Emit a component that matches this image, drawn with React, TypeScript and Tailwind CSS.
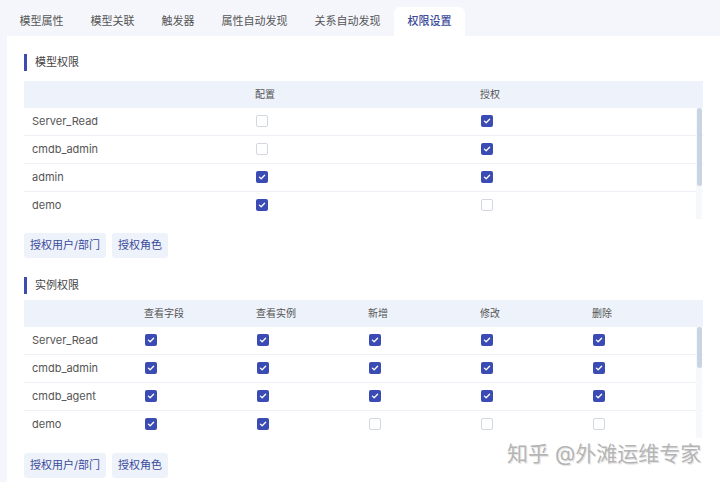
import React from 'react'

const tabs = ['模型属性', '模型关联', '触发器', '属性自动发现', '关系自动发现', '权限设置']

function Checkbox({ checked }: { checked: boolean }) {
  if (!checked) {
    return <span className="block w-[12px] h-[12px] rounded-[2px] border border-[#d3d7e0] bg-white" />
  }
  return (
    <span className="flex items-center justify-center w-[12px] h-[12px] rounded-[2px] bg-[#3a4cb3]">
      <svg width="8" height="8" viewBox="0 0 8 8" fill="none">
        <path d="M1.4 4.1 3.2 5.8 6.6 2.3" stroke="#fff" strokeWidth="1.3" strokeLinecap="round" strokeLinejoin="round" />
      </svg>
    </span>
  )
}

function SectionTitle({ title }: { title: string }) {
  return (
    <div className="flex items-center gap-[8px] h-[17px]">
      <span className="w-[3px] h-[17px] bg-[#3d4cae]" />
      <span className="text-[11px] text-[#444]">{title}</span>
    </div>
  )
}

function Buttons() {
  return (
    <div className="flex gap-[6px]">
      {['授权用户/部门', '授权角色'].map(b => (
        <button key={b} className="h-[25px] px-[6px] rounded-[3px] bg-[#eef2fa] text-[11px] leading-[25px] whitespace-nowrap text-[#3b4a9a]">{b}</button>
      ))}
    </div>
  )
}

function PermTable({ headers, widths, rows, bodyH, thumbH }: {
  headers: string[]; widths: number[]; rows: { name: string; vals: boolean[] }[]; bodyH: number; thumbH: number
}) {
  return (
    <div className="w-[679px]">
      <div className="flex h-[27px] items-center bg-[#edf2fb]">
        {headers.map((h, i) => (
          <div key={i} style={{ width: widths[i] }} className="pl-[8px] text-[10px] text-[#555]">{h}</div>
        ))}
      </div>
      <div className="relative overflow-hidden" style={{ height: bodyH }}>
        {rows.map(r => (
          <div key={r.name} className="flex h-[28px] items-center pb-[1px] border-b border-[#eef0f5]">
            <div style={{ width: widths[0] }} className="pl-[8px] text-[11px] text-[#555]">{r.name}</div>
            {r.vals.map((v, i) => (
              <div key={i} style={{ width: widths[i + 1] }} className="pl-[9px]">
                <Checkbox checked={v} />
              </div>
            ))}
          </div>
        ))}
        <div className="absolute right-[1px] top-0 bottom-0 w-[6px] bg-[#f6f8fb]">
          <div className="w-[5px] mx-auto rounded-full bg-[#c9d3e3]" style={{ height: thumbH }} />
        </div>
      </div>
    </div>
  )
}

export default function App() {
  const modelRows = [
    { name: 'Server_Read', vals: [false, true] },
    { name: 'cmdb_admin', vals: [false, true] },
    { name: 'admin', vals: [true, true] },
    { name: 'demo', vals: [true, false] },
    { name: 'test', vals: [false, false] },
  ]
  const instRows = [
    { name: 'Server_Read', vals: [true, true, true, true, true] },
    { name: 'cmdb_admin', vals: [true, true, true, true, true] },
    { name: 'cmdb_agent', vals: [true, true, true, true, true] },
    { name: 'demo', vals: [true, true, false, false, false] },
    { name: 'test', vals: [false, false, false, false, false] },
  ]

  return (
    <div className="relative w-[720px] h-[482px] overflow-hidden bg-[#f4f6fb]" style={{ fontFamily: 'Inter, "Noto Sans CJK SC", sans-serif' }}>
      <div className="flex items-end h-[36px] pl-[6px]">
        {tabs.map((t, i) => (
          <div
            key={t}
            className={`h-[29px] px-[13.5px] flex items-center rounded-t-[6px] text-[11px] whitespace-nowrap ${
              i === tabs.length - 1 ? 'bg-white text-[#3b4a9a] font-medium' : 'text-[#555]'
            }`}
          >
            {t}
          </div>
        ))}
      </div>

      <div className="ml-[7px] h-[446px] bg-white pl-[17px] pt-[18px]">
        <SectionTitle title="模型权限" />
        <div className="mt-[10px]">
          <PermTable headers={['', '配置', '授权']} widths={[223, 225, 224]} rows={modelRows} bodyH={111} thumbH={78} />
        </div>
        <div className="mt-[14px]">
          <Buttons />
        </div>
        <div className="mt-[19px]">
          <SectionTitle title="实例权限" />
        </div>
        <div className="mt-[6px]">
          <PermTable
            headers={['', '查看字段', '查看实例', '新增', '修改', '删除']}
            widths={[112, 112, 112, 112, 112, 112]}
            rows={instRows}
            bodyH={111}
            thumbH={41}
          />
        </div>
        <div className="mt-[15px]">
          <Buttons />
        </div>
      </div>

      <div
        className="absolute left-[507px] top-[438px] text-[21px] text-[#b4b4b4] whitespace-nowrap"
        style={{ textShadow: '0 0 2px #fff, 1px 1px 1px rgba(0,0,0,0.15)' }}
      >
        知乎 @外滩运维专家
      </div>
    </div>
  )
}
